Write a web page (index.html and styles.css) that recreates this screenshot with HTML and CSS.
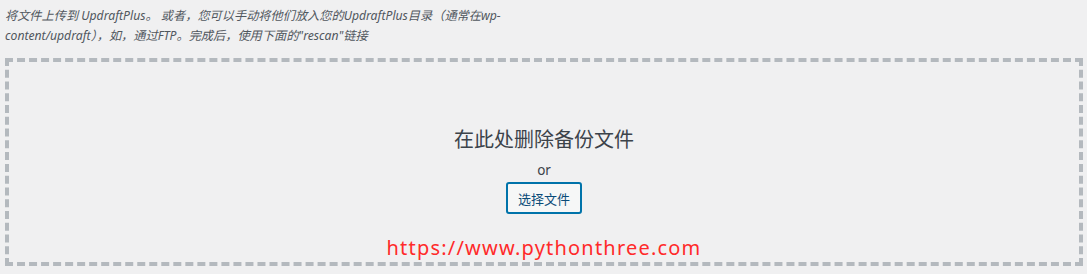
FILE: index.html
```html
<!DOCTYPE html>
<html lang="zh">
<head>
<meta charset="utf-8">
<link rel="stylesheet" href="styles.css">
</head>
<body>
<div class="page">
  <p class="desc">将文件上传到 UpdraftPlus。 或者，您可以手动将他们放入您的UpdraftPlus目录（通常在wp-<br>content/updraft），如，通过FTP。完成后，使用下面的"rescan"链接</p>
  <div class="drop-area">
    <div class="drop-inner">
      <p class="drop-info">在此处删除备份文件</p>
      <p class="or">or</p>
      <button class="select-btn" type="button">选择文件</button>
    </div>
    <div class="watermark">https://www.pythonthree.com</div>
  </div>
</div>
</body>
</html>
```

FILE: styles.css
```css
html, body {
  margin: 0;
  padding: 0;
  background: #f0f0f1;
}
body {
  font-family: "Noto Sans", "Noto Sans CJK SC", sans-serif;
  color: #3c434a;
}
.page {
  padding: 0 4px 0 5px;
}
.desc {
  margin: 0;
  padding-top: 6px;
  font-size: 12.2px;
  line-height: 20px;
  font-style: italic;
  color: #50575e;
}
.drop-area {
  margin-top: 12px;
  height: 200px;
  border: 4px dashed #b4b9be;
  display: flex;
  flex-direction: column;
  align-items: center;
  width: 1070px;
}
.drop-inner {
  display: flex;
  flex-direction: column;
  align-items: center;
  padding-top: 65px;
}
.drop-info {
  margin: 0;
  font-size: 20px;
  line-height: 26px;
  color: #3c434a;
}
.or {
  margin: 8px 0 0;
  font-size: 13.5px;
  line-height: 18px;
  color: #3c434a;
}
.select-btn {
  margin-top: 3px;
  width: 76px;
  height: 32px;
  border: 2px solid #0073aa;
  border-radius: 3px;
  background: #f6f7f7;
  color: #0a4b78;
  font-family: "Noto Sans CJK SC", sans-serif;
  font-size: 13px;
  padding: 0;
}
.watermark {
  margin-top: 20px;
  font-family: "Noto Sans", sans-serif;
  font-size: 20px;
  letter-spacing: 1.2px;
  color: #ff2a2a;
}
```
